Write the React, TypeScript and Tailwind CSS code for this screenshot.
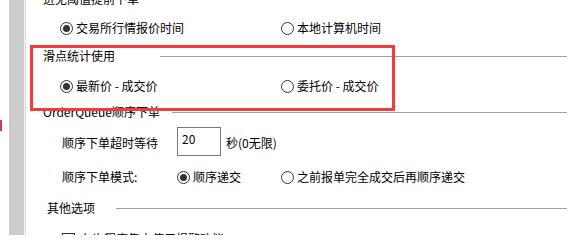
import React from "react";

function Radio({ checked, label }: { checked?: boolean; label: string }) {
  return (
    <div className="flex items-center gap-[3px]">
      <span className="flex h-[13px] w-[13px] items-center justify-center rounded-full border border-[#333333] bg-white">
        {checked && <span className="h-[7px] w-[7px] rounded-full bg-[#333333]" />}
      </span>
      <span>{label}</span>
    </div>
  );
}

function Heading({ label, width, indent = "pl-[17px]" }: { label: string; width: string; indent?: string }) {
  return (
    <div className="flex h-full items-center">
      <div className={`${width} ${indent} shrink-0 whitespace-nowrap`}>{label}</div>
      <div className="h-px flex-1 bg-[#a0a0a0]" />
    </div>
  );
}

export default function App() {
  return (
    <div
      className="relative flex h-[235px] w-[574px] overflow-hidden bg-white text-[12px] leading-[16px] text-black"
      style={{ fontFamily: '"Noto Sans CJK SC", "Noto Sans", sans-serif' }}
    >
      {/* left strip */}
      <div className="w-[9px] shrink-0">
        <div className="mt-[120px] h-[11px] w-[2px] bg-[#c8404e]" />
      </div>
      <div className="w-[15px] shrink-0 bg-[#cccccc]" />
      <div className="w-px shrink-0 bg-[#f2f2f2]" />
      <div className="w-px shrink-0 bg-[#dadada]" />

      {/* settings panel */}
      <div className="flex flex-1 flex-col pr-[7px]">
        <div className="-mt-[16px] h-[30px] shrink-0">
          <Heading label="进无阈值提前下单" width="w-[134px]" />
        </div>

        <div className="flex h-[28px] shrink-0 items-center pl-[34px]">
          <div className="w-[221px]">
            <Radio checked label="交易所行情报价时间" />
          </div>
          <Radio label="本地计算机时间" />
        </div>

        <div className="h-[28px] shrink-0">
          <Heading label="滑点统计使用" width="w-[134px]" />
        </div>

        <div className="flex h-[32px] shrink-0 items-center pl-[34px]">
          <div className="w-[221px]">
            <Radio checked label="最新价 - 成交价" />
          </div>
          <Radio label="委托价 - 成交价" />
        </div>

        <div className="h-[20px] shrink-0">
          <Heading label="OrderQueue顺序下单" width="w-[146px]" />
        </div>

        <div className="flex h-[42px] shrink-0 items-center pl-[36px]">
          <div className="w-[115px]">顺序下单超时等待</div>
          <div className="mb-[3px] h-[29px] w-[44px] border border-[#7a7a7a] pl-[4px] pt-[3px]">20</div>
          <div className="pl-[5px]">秒(0无限)</div>
        </div>

        <div className="flex h-[26px] shrink-0 items-center pl-[36px]">
          <div className="w-[115px]">顺序下单模式:</div>
          <div className="w-[104px]">
            <Radio checked label="顺序递交" />
          </div>
          <Radio label="之前报单完全成交后再顺序递交" />
        </div>

        <div className="h-[36px] shrink-0">
          <Heading label="其他选项" width="w-[90px]" indent="pl-[21px]" />
        </div>

        <div className="flex h-[26px] shrink-0 items-center gap-[5px] pl-[36px]">
          <span className="h-[13px] w-[13px] border border-[#333333]" />
          <span>允许程序集中使用报警功能</span>
        </div>
      </div>

      {/* highlight frame */}
      <div className="absolute left-[30px] top-[45px] h-[66px] w-[365px] border-[3px] border-[#f03c3c]" />
    </div>
  );
}
